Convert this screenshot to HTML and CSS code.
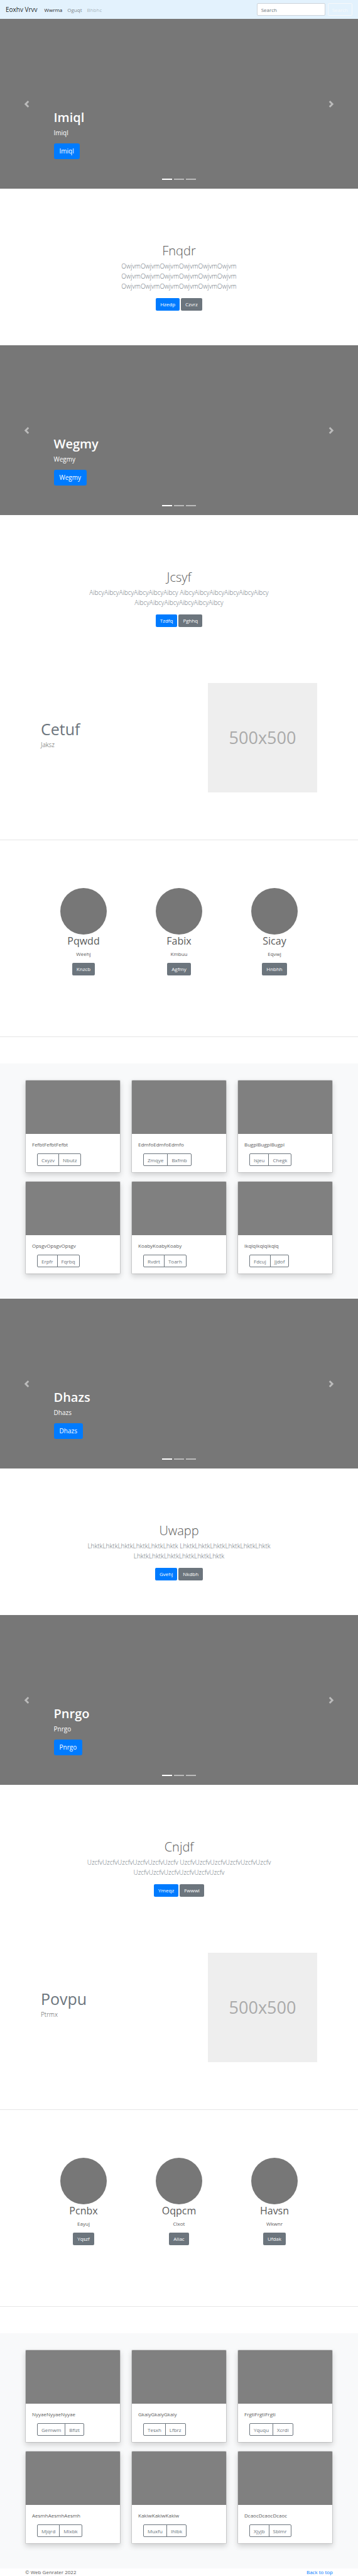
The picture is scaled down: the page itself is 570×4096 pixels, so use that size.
FILE: index.html
```
<!DOCTYPE html>
<html lang="en">
<head>
<meta charset="utf-8">
<meta name="viewport" content="width=device-width, initial-scale=1">
<title>Eoxhv Vrvv</title>
<link rel="stylesheet" href="styles.css">
</head>
<body>
<svg class="sprite" aria-hidden="true">
  <symbol id="prev" viewBox="0 0 8 8"><path d="M5.25 0l-4 4 4 4 1.5-1.5-2.5-2.5 2.5-2.5-1.5-1.5z"/></symbol>
  <symbol id="next" viewBox="0 0 8 8"><path d="M2.75 0l-1.5 1.5 2.5 2.5-2.5 2.5 1.5 1.5 4-4-4-4z"/></symbol>
</svg>
<header id="top">
  <nav class="navbar">
    <a class="brand" href="#">Eoxhv Vrvv</a>
    <div class="nav-links">
      <a class="nav-link active" href="#">Wwrma</a>
      <a class="nav-link" href="#">Oguqt</a>
      <a class="nav-link disabled" href="#">Bhbhc</a>
    </div>
    <form class="search">
      <input class="search-input" type="search" placeholder="Search" aria-label="Search">
      <button class="search-btn" type="submit">Search</button>
    </form>
  </nav>
</header>
<main>
  <section class="carousel">
    <h1 class="caption-title">Imiql</h1>
    <p class="caption-text">Imiql</p>
    <a class="btn btn-lg btn-primary" href="#">Imiql</a>
    <button class="control control-prev" aria-label="Previous"><svg class="chevron"><use href="#prev"/></svg></button>
    <button class="control control-next" aria-label="Next"><svg class="chevron"><use href="#next"/></svg></button>
    <ol class="indicators"><li class="dot current"></li><li class="dot"></li><li class="dot"></li></ol>
  </section>

  <section class="intro">
    <h1 class="intro-title">Fnqdr</h1>
    <p class="lead intro-text">OwjvmOwjvmOwjvmOwjvmOwjvmOwjvm<br>OwjvmOwjvmOwjvmOwjvmOwjvmOwjvm<br>OwjvmOwjvmOwjvmOwjvmOwjvmOwjvm</p>
    <div class="actions"><a class="btn btn-primary" href="#">Hzedp</a><a class="btn btn-secondary" href="#">Czvrz</a></div>
  </section>

  <section class="carousel">
    <h1 class="caption-title">Wegmy</h1>
    <p class="caption-text">Wegmy</p>
    <a class="btn btn-lg btn-primary" href="#">Wegmy</a>
    <button class="control control-prev" aria-label="Previous"><svg class="chevron"><use href="#prev"/></svg></button>
    <button class="control control-next" aria-label="Next"><svg class="chevron"><use href="#next"/></svg></button>
    <ol class="indicators"><li class="dot current"></li><li class="dot"></li><li class="dot"></li></ol>
  </section>

  <section class="intro">
    <h1 class="intro-title">Jcsyf</h1>
    <p class="lead intro-text">AibcyAibcyAibcyAibcyAibcyAibcy AibcyAibcyAibcyAibcyAibcyAibcy<br>AibcyAibcyAibcyAibcyAibcyAibcy</p>
    <div class="actions"><a class="btn btn-primary" href="#">Tzdfq</a><a class="btn btn-secondary" href="#">Pghhq</a></div>
  </section>

  <section class="feature">
    <div class="feature-copy">
      <h2 class="feature-title">Cetuf</h2>
      <p class="lead feature-text">Jaksz</p>
    </div>
    <div class="feature-media"><div class="placeholder">500x500</div></div>
  </section>
  <hr class="divider">
  <section class="people">
    <div class="person"><div class="avatar"></div><h2 class="person-name">Pqwdd</h2><p class="person-text">Weehj</p><a class="btn btn-secondary" href="#">Knzcb</a></div>
    <div class="person"><div class="avatar"></div><h2 class="person-name">Fabix</h2><p class="person-text">Kmbuu</p><a class="btn btn-secondary" href="#">Agfmy</a></div>
    <div class="person"><div class="avatar"></div><h2 class="person-name">Sicay</h2><p class="person-text">Eqvwj</p><a class="btn btn-secondary" href="#">Hnbhh</a></div>
  </section>
  <hr class="divider">
  <section class="album">
    <article class="card"><div class="thumb"></div><div class="card-body"><p class="card-text">FefbtFefbtFefbt</p><div class="group"><button class="group-btn">Cxyzv</button><button class="group-btn">Nbutz</button></div></div></article>
    <article class="card"><div class="thumb"></div><div class="card-body"><p class="card-text">EdmfoEdmfoEdmfo</p><div class="group"><button class="group-btn">Zmqye</button><button class="group-btn">Bxfmb</button></div></div></article>
    <article class="card"><div class="thumb"></div><div class="card-body"><p class="card-text">BugplBugplBugpl</p><div class="group"><button class="group-btn">Isjeu</button><button class="group-btn">Chegk</button></div></div></article>
    <article class="card"><div class="thumb"></div><div class="card-body"><p class="card-text">OpsgvOpsgvOpsgv</p><div class="group"><button class="group-btn">Erpfr</button><button class="group-btn">Fqrbq</button></div></div></article>
    <article class="card"><div class="thumb"></div><div class="card-body"><p class="card-text">KoabyKoabyKoaby</p><div class="group"><button class="group-btn">Rvdrt</button><button class="group-btn">Toarh</button></div></div></article>
    <article class="card"><div class="thumb"></div><div class="card-body"><p class="card-text">IkqlqIkqlqIkqlq</p><div class="group"><button class="group-btn">Fdcuj</button><button class="group-btn">Jjdof</button></div></div></article>
  </section>

  <section class="carousel">
    <h1 class="caption-title">Dhazs</h1>
    <p class="caption-text">Dhazs</p>
    <a class="btn btn-lg btn-primary" href="#">Dhazs</a>
    <button class="control control-prev" aria-label="Previous"><svg class="chevron"><use href="#prev"/></svg></button>
    <button class="control control-next" aria-label="Next"><svg class="chevron"><use href="#next"/></svg></button>
    <ol class="indicators"><li class="dot current"></li><li class="dot"></li><li class="dot"></li></ol>
  </section>

  <section class="intro">
    <h1 class="intro-title">Uwapp</h1>
    <p class="lead intro-text">LhktkLhktkLhktkLhktkLhktkLhktk LhktkLhktkLhktkLhktkLhktkLhktk<br>LhktkLhktkLhktkLhktkLhktkLhktk</p>
    <div class="actions"><a class="btn btn-primary" href="#">Gvehj</a><a class="btn btn-secondary" href="#">Nkdbh</a></div>
  </section>

  <section class="carousel">
    <h1 class="caption-title">Pnrgo</h1>
    <p class="caption-text">Pnrgo</p>
    <a class="btn btn-lg btn-primary" href="#">Pnrgo</a>
    <button class="control control-prev" aria-label="Previous"><svg class="chevron"><use href="#prev"/></svg></button>
    <button class="control control-next" aria-label="Next"><svg class="chevron"><use href="#next"/></svg></button>
    <ol class="indicators"><li class="dot current"></li><li class="dot"></li><li class="dot"></li></ol>
  </section>

  <section class="intro">
    <h1 class="intro-title">Cnjdf</h1>
    <p class="lead intro-text">UzcfvUzcfvUzcfvUzcfvUzcfvUzcfv UzcfvUzcfvUzcfvUzcfvUzcfvUzcfv<br>UzcfvUzcfvUzcfvUzcfvUzcfvUzcfv</p>
    <div class="actions"><a class="btn btn-primary" href="#">Ymeqz</a><a class="btn btn-secondary" href="#">Fwwwi</a></div>
  </section>

  <section class="feature">
    <div class="feature-copy">
      <h2 class="feature-title">Povpu</h2>
      <p class="lead feature-text">Ptrmx</p>
    </div>
    <div class="feature-media"><div class="placeholder">500x500</div></div>
  </section>
  <hr class="divider">
  <section class="people">
    <div class="person"><div class="avatar"></div><h2 class="person-name">Pcnbx</h2><p class="person-text">Eayuj</p><a class="btn btn-secondary" href="#">Yqszf</a></div>
    <div class="person"><div class="avatar"></div><h2 class="person-name">Oqpcm</h2><p class="person-text">Clxot</p><a class="btn btn-secondary" href="#">Aliac</a></div>
    <div class="person"><div class="avatar"></div><h2 class="person-name">Havsn</h2><p class="person-text">Wkwnr</p><a class="btn btn-secondary" href="#">Ufdak</a></div>
  </section>
  <hr class="divider">
  <section class="album">
    <article class="card"><div class="thumb"></div><div class="card-body"><p class="card-text">NyyaeNyyaeNyyae</p><div class="group"><button class="group-btn">Gemwm</button><button class="group-btn">Bfizt</button></div></div></article>
    <article class="card"><div class="thumb"></div><div class="card-body"><p class="card-text">GkaiyGkaiyGkaiy</p><div class="group"><button class="group-btn">Tesxh</button><button class="group-btn">Lfbrz</button></div></div></article>
    <article class="card"><div class="thumb"></div><div class="card-body"><p class="card-text">FrgtiFrgtiFrgti</p><div class="group"><button class="group-btn">Yququ</button><button class="group-btn">Xcrdi</button></div></div></article>
    <article class="card"><div class="thumb"></div><div class="card-body"><p class="card-text">AesmhAesmhAesmh</p><div class="group"><button class="group-btn">Mjqrd</button><button class="group-btn">Mlxbk</button></div></div></article>
    <article class="card"><div class="thumb"></div><div class="card-body"><p class="card-text">KakiwKakiwKakiw</p><div class="group"><button class="group-btn">Muxfu</button><button class="group-btn">Ihlbk</button></div></div></article>
    <article class="card"><div class="thumb"></div><div class="card-body"><p class="card-text">DcaocDcaocDcaoc</p><div class="group"><button class="group-btn">Xjyjb</button><button class="group-btn">Sblmr</button></div></div></article>
  </section>
</main>
<footer class="footer">
  <span>© Web Genrater 2022</span>
  <a class="back" href="#top">Back to top</a>
</footer>
</body>
</html>
```
FILE: styles.css
```
* {
  box-sizing: border-box;
}

body {
  margin: 0;
  background: #fff;
  color: #5a5a5a;
  font: 400 8px/13px "Open Sans", "Noto Sans", sans-serif;
}

h1, h2, p, ol {
  margin: 0;
  padding: 0;
}

a {
  text-decoration: none;
}

button, input {
  font: inherit;
}

.sprite {
  display: none;
}

/* Navigation */
.navbar {
  display: flex;
  align-items: center;
  height: 30px;
  padding: 0 9px;
  background: #e3f2fd;
}

.brand {
  margin-right: 11px;
  color: rgba(0, 0, 0, .9);
  font-size: 10px;
}

.nav-links {
  display: flex;
  flex: 1;
  gap: 8px;
}

.nav-link {
  color: rgba(0, 0, 0, .5);
}

.nav-link.active {
  color: rgba(0, 0, 0, .9);
}

.nav-link.disabled {
  color: rgba(0, 0, 0, .3);
}

.search {
  display: flex;
  gap: 4px;
}

.search-input {
  width: 109px;
  height: 20px;
  padding: 0 6px;
  border: 1px solid #ced4da;
  border-radius: 2px;
  background: #fff;
}

.search-input::placeholder {
  color: #6c757d;
}

.search-btn {
  height: 20px;
  padding: 0 6px;
  border: 1px solid #f8f9fa;
  border-radius: 2px;
  background: none;
  color: #f8f9fa;
}

/* Buttons */
.btn {
  display: inline-block;
  height: 20px;
  padding: 0 7px;
  border-radius: 2px;
  color: #fff;
  line-height: 20px;
}

.btn-primary {
  background: #007bff;
}

.btn-secondary {
  background: #6c757d;
}

.btn-lg {
  height: 25px;
  padding: 0 9px;
  border-radius: 3px;
  font-size: 10px;
  line-height: 25px;
}

/* Carousel */
.carousel {
  position: relative;
  display: flex;
  flex-direction: column;
  align-items: flex-start;
  justify-content: flex-end;
  min-height: 270px;
  padding: 0 15% 47px;
  background: #777;
  color: #fff;
}

.caption-title {
  margin-bottom: 4px;
  font-size: 20px;
  font-weight: 600;
  line-height: 25px;
}

.caption-text {
  margin-bottom: 9px;
  font-size: 10px;
  line-height: 16px;
}

.control {
  position: absolute;
  top: 0;
  bottom: 0;
  display: flex;
  align-items: center;
  justify-content: center;
  width: 15%;
  padding: 0;
  border: 0;
  background: none;
  opacity: .5;
}

.control-prev {
  left: 0;
}

.control-next {
  right: 0;
}

.chevron {
  width: 11px;
  height: 11px;
  fill: #fff;
}

.indicators {
  position: absolute;
  right: 15%;
  bottom: 14px;
  left: 15%;
  display: flex;
  justify-content: center;
  gap: 3px;
  list-style: none;
}

.dot {
  width: 16px;
  height: 2px;
  background: #fff;
  opacity: .5;
}

.dot.current {
  opacity: 1;
}

/* Intro */
.intro {
  padding: 86px 40px 55px;
  text-align: center;
}

.intro-title {
  margin-bottom: 4px;
  font-size: 20px;
  font-weight: 300;
  line-height: 25px;
}

.lead {
  font-size: 10px;
  font-weight: 300;
  line-height: 16px;
}

.intro-text {
  margin-bottom: 11px;
  color: #6c757d;
}

.actions {
  display: flex;
  justify-content: center;
  gap: 2px;
}

/* Feature */
.feature {
  display: grid;
  grid-template-columns: 7fr 5fr;
  align-items: center;
  width: 80%;
  margin: 34px auto 75px;
}

.feature-copy,
.feature-media {
  padding: 0 8px;
}

.feature-title {
  margin-bottom: 2px;
  color: #6c757d;
  font-size: 25px;
  font-weight: 400;
  line-height: 30px;
}

.feature-text {
  margin-bottom: 10px;
}

.placeholder {
  display: flex;
  align-items: center;
  justify-content: center;
  aspect-ratio: 1;
  background: #eee;
  color: #aaa;
  font-size: 27px;
  line-height: 32px;
}

.divider {
  height: 1px;
  margin: 0;
  border: 0;
  background: #e6e6e6;
}

/* People */
.people {
  display: grid;
  grid-template-columns: repeat(3, 1fr);
  width: 80%;
  margin: 76px auto 97px;
}

.person {
  display: flex;
  flex-direction: column;
  align-items: center;
}

.avatar {
  width: 74px;
  height: 74px;
  border-radius: 50%;
  background: #777;
}

.person-name {
  margin-bottom: 4px;
  font-size: 16px;
  font-weight: 400;
  line-height: 20px;
}

.person-text {
  margin-bottom: 8px;
}

/* Album */
.album {
  display: grid;
  grid-template-columns: repeat(3, 1fr);
  gap: 13px 17px;
  margin-top: 42px;
  padding: 26px 40px 39px;
  background: #f8f9fa;
}

.card {
  border: 1px solid rgba(0, 0, 0, .125);
  border-radius: 2px;
  background: #fff;
  background-clip: padding-box;
  box-shadow: 0 4px 8px rgba(0, 0, 0, .15);
}

.thumb {
  height: 85px;
  border-radius: 1px 1px 0 0;
  background: #808080;
}

.card-body {
  padding: 10px;
}

.card-text {
  margin-bottom: 8px;
}

.group {
  display: flex;
  margin-left: 8px;
}

.group-btn {
  height: 20px;
  padding: 0 6px;
  border: 1px solid #6c757d;
  border-radius: 2px 0 0 2px;
  background: none;
  color: #6c757d;
}

.group-btn + .group-btn {
  margin-left: -1px;
  border-radius: 0 2px 2px 0;
}

/* Footer */
.footer {
  display: flex;
  justify-content: space-between;
  padding: 0 40px;
  line-height: 12px;
}

.back {
  color: #007bff;
}
```
